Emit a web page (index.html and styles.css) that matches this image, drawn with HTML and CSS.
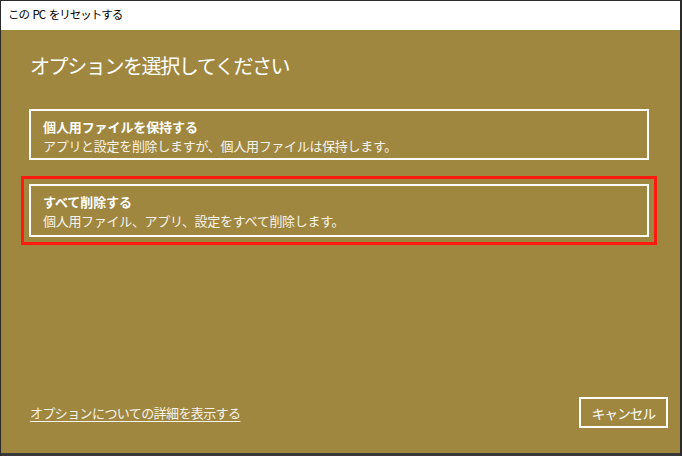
FILE: index.html
```html
<!DOCTYPE html>
<html lang="ja">
<head>
<meta charset="utf-8">
<title>この PC をリセットする</title>
<link rel="stylesheet" href="styles.css">
</head>
<body>
<div class="window">
  <div class="titlebar">この PC をリセットする</div>
  <div class="content">
    <h1 class="heading">オプションを選択してください</h1>
    <div class="options">
      <div class="option">
        <div class="option-title">個人用ファイルを保持する</div>
        <div class="option-desc">アプリと設定を削除しますが、個人用ファイルは保持します。</div>
      </div>
      <div class="option selected">
        <div class="option-title">すべて削除する</div>
        <div class="option-desc">個人用ファイル、アプリ、設定をすべて削除します。</div>
      </div>
    </div>
    <div class="footer">
      <a class="more-link" href="#">オプションについての詳細を表示する</a>
      <button class="cancel">キャンセル</button>
    </div>
  </div>
  <div class="bottom-edge"></div>
</div>
</body>
</html>
```
FILE: styles.css
```css
* { box-sizing: border-box; }
html, body {
  margin: 0;
  padding: 0;
  width: 682px;
  height: 456px;
  overflow: hidden;
  background: #2b2b2b;
  font-family: "Noto Sans CJK JP", "Noto Sans", sans-serif;
}
.window {
  width: 682px;
  height: 456px;
  display: flex;
  flex-direction: column;
  border-top: 1px solid #2b2b2b;
  border-left: 1px solid #2b2b2b;
  border-right: 2px solid #2b2b2b;
}
.titlebar {
  height: 29px;
  background: #ffffff;
  color: #000000;
  font-size: 11.5px;
  line-height: 27px;
  padding-left: 7px;
  letter-spacing: -1px;
  word-spacing: 2px;
}
.content {
  flex: 1;
  background: #a0873f;
  display: flex;
  flex-direction: column;
  padding: 22px 12px 25px 28px;
}
.heading {
  margin: 0;
  font-weight: normal;
  color: #ffffff;
  font-size: 20px;
  line-height: 28px;
  letter-spacing: -1.4px;
  padding-left: 1px;
}
.options {
  margin-top: 29px;
  margin-right: 19px;
  display: flex;
  flex-direction: column;
  gap: 24px;
}
.option {
  border: 2px solid #ffffff;
  padding: 6px 12px 3px;
  color: #ffffff;
}
.option.selected {
  outline: 3px solid #ff1a10;
  outline-offset: 5px;
  padding-bottom: 5px;
}
.option-title {
  font-size: 13px;
  font-weight: bold;
  line-height: 19px;
  letter-spacing: -0.1px;
}
.option-desc {
  font-size: 13px;
  line-height: 19px;
  letter-spacing: -0.3px;
  color: #f6f3ea;
}
.footer {
  margin-top: auto;
  display: flex;
  align-items: center;
  justify-content: space-between;
  padding-left: 1px;
}
.more-link {
  color: #f6f3ea;
  font-size: 13px;
  line-height: 19px;
  letter-spacing: -0.6px;
  text-decoration: underline;
  text-underline-offset: 3px;
}
.cancel {
  width: 89px;
  height: 31px;
  border: 2px solid #ffffff;
  background: transparent;
  color: #ffffff;
  font-family: "Noto Sans CJK JP", "Noto Sans", sans-serif;
  font-size: 13.5px;
  letter-spacing: -0.8px;
  padding: 0;
}
.bottom-edge {
  height: 3px;
  background: #3a3a3a;
}
```
